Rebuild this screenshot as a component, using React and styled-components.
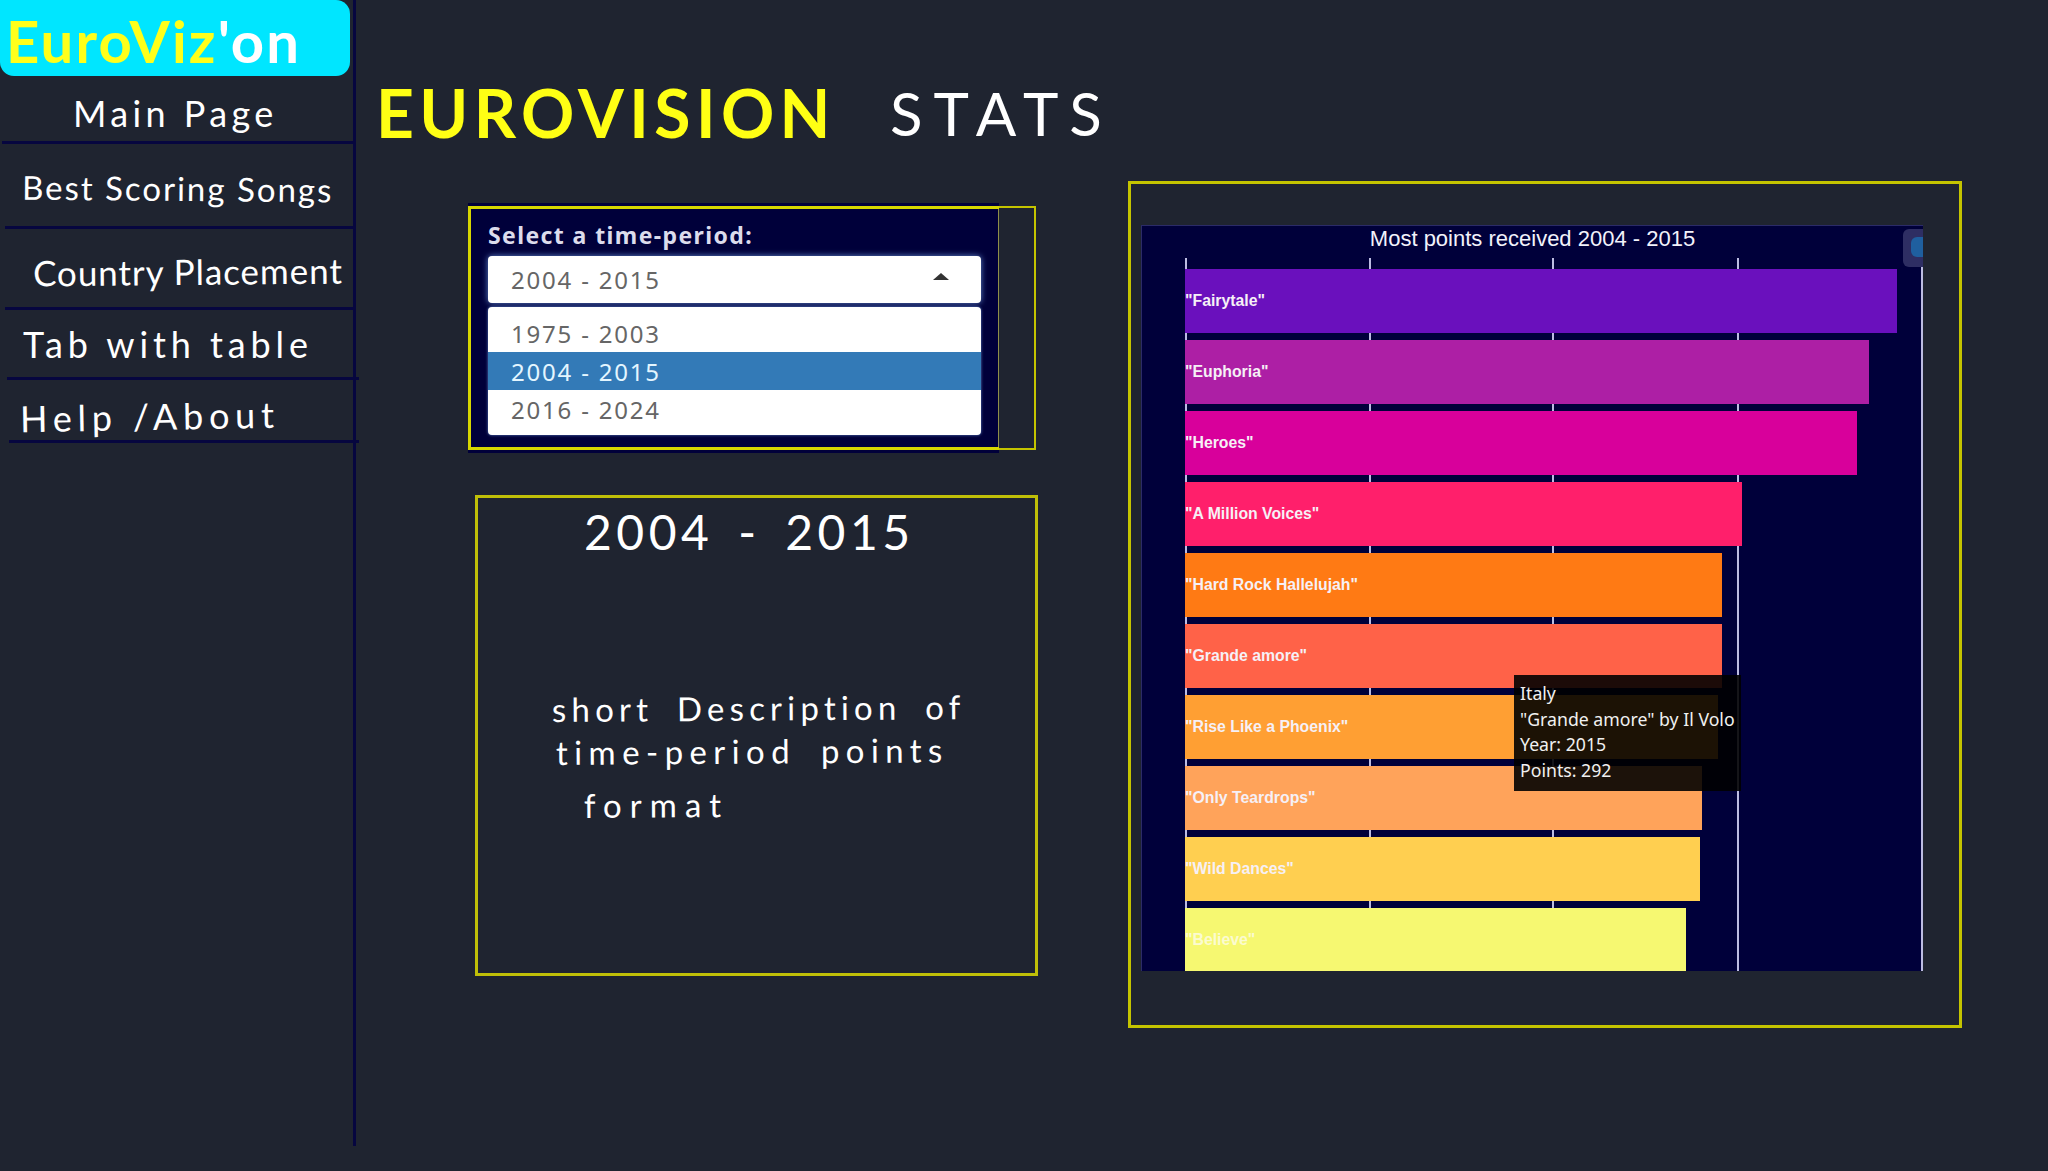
import React from 'react';
import styled, { createGlobalStyle } from 'styled-components';

const NAV_ITEMS = [
  { label: 'Main Page', height: 144, inset: 2, indent: 71, tilt: 0, size: 36, spacing: 4.4, right: 0, lift: 8 },
  { label: 'Best Scoring Songs', height: 85, inset: 5, indent: 17, tilt: 0.5, size: 33, spacing: 2, right: 0, lift: 5 },
  { label: 'Country Placement', height: 81, inset: 5, indent: 28, tilt: -0.5, size: 35, spacing: 0.95, right: 0, lift: 5 },
  { label: 'Tab with table', height: 70, inset: 7, indent: 16, tilt: 0, size: 36, spacing: 4.9, right: 6, lift: 0 },
  { label: 'Help /About', height: 63, inset: 9, indent: 11, tilt: -1, size: 36, spacing: 5.8, right: 6, lift: 12 },
];

const SONGS = [
  { title: '"Fairytale"', end: 1898, color: '#6a10bd' },
  { title: '"Euphoria"', end: 1870, color: '#ad1fa5' },
  { title: '"Heroes"', end: 1858, color: '#d8009b' },
  { title: '"A Million Voices"', end: 1743, color: '#ff1f6b' },
  { title: '"Hard Rock Hallelujah"', end: 1723, color: '#ff7a14' },
  { title: '"Grande amore"', end: 1723, color: '#ff6248' },
  { title: '"Rise Like a Phoenix"', end: 1719, color: '#ff9f33' },
  { title: '"Only Teardrops"', end: 1703, color: '#ffa35a' },
  { title: '"Wild Dances"', end: 1701, color: '#ffcf50' },
  { title: '"Believe"', end: 1687, color: '#f6f871', faded: true },
];

const GRID_LINES = [43, 227, 410, 595, 779];
const PERIODS = ['1975 - 2003', '2004 - 2015', '2016 - 2024'];
const PLOT_LEFT = 1186;

const GlobalStyle = createGlobalStyle`
  html, body {
    margin: 0;
    background: #1f2430;
  }
  * {
    box-sizing: border-box;
  }
`;

const Page = styled.div`
  display: flex;
  width: 2048px;
  height: 1171px;
  overflow: hidden;
  background: #1f2430;
  color: #fff;
  font-family: "Lato", "Liberation Sans", sans-serif;
`;

const Sidebar = styled.aside`
  width: 356px;
  height: 1146px;
  flex-shrink: 0;
  border-right: 3px solid #06063f;
`;

const Logo = styled.div`
  width: 350px;
  height: 76px;
  padding: 9px 0 0 6px;
  background: #00e6ff;
  border-radius: 0 14px 14px 14px;
  color: #ffff1a;
  font-size: 58px;
  font-weight: 700;
  line-height: 64px;
  letter-spacing: 2.2px;
  white-space: nowrap;
  span {
    color: #fff;
  }
`;

const NavRow = styled.div`
  display: flex;
  align-items: center;
  height: ${p => p.$height}px;
  margin-left: ${p => p.$inset}px;
  margin-right: -${p => p.$right}px;
  padding: ${p => p.$lift}px 0 0 ${p => p.$indent}px;
  border-bottom: 3px solid #06063f;
  &:first-of-type {
    height: 68px;
  }
`;

const NavLabel = styled.span`
  font-size: ${p => p.$size}px;
  letter-spacing: ${p => p.$spacing}px;
  white-space: nowrap;
  transform: rotate(${p => p.$tilt}deg);
`;

const Main = styled.main`
  flex: 1;
  padding-left: 20px;
`;

const Heading = styled.h1`
  display: flex;
  height: 181px;
  margin: 0;
  padding-top: 78px;
  font-size: 66px;
  font-weight: 700;
  line-height: 70px;
  letter-spacing: 5.4px;
  white-space: nowrap;
`;

const HeadingAccent = styled.span`
  color: #ffff14;
`;

const HeadingRest = styled.span`
  margin-left: 54px;
  font-size: 60px;
  font-weight: 400;
  letter-spacing: 11px;
`;

const Columns = styled.div`
  display: flex;
  align-items: flex-start;
`;

const LeftColumn = styled.div`
  display: flex;
  flex-direction: column;
  width: 570px;
  margin: 25px 90px 0 92px;
`;

const SelectFrame = styled.div`
  width: 568px;
  height: 244px;
  border: 2px solid #c4c400;
  border-left: none;
`;

const SelectPanel = styled.div`
  display: flex;
  flex-direction: column;
  width: 531px;
  height: 250px;
  margin-top: -5px;
  padding: 16px 18px 0 20px;
  background: #00003a;
  border-top: 3px solid #00003a;
  border-bottom: 3px solid #00003a;
  box-shadow: inset 3px 3px 0 #d6d600, inset 0 -3px 0 #d6d600, inset -1px 0 0 #8f8f4a;
  font-family: "Noto Sans", "Liberation Sans", sans-serif;
`;

const SelectLabel = styled.label`
  height: 26px;
  color: #dcdcec;
  font-size: 23px;
  font-weight: 700;
  line-height: 26px;
  letter-spacing: 1.4px;
`;

const SelectControl = styled.div`
  display: flex;
  align-items: center;
  justify-content: space-between;
  height: 47px;
  margin-top: 8px;
  padding: 0 32px 0 23px;
  background: #fff;
  border-radius: 4px;
  box-shadow: 0 0 6px rgba(130, 180, 255, 0.75);
  color: #666;
  font-size: 24px;
  letter-spacing: 1.8px;
`;

const Caret = styled.i`
  width: 0;
  height: 0;
  margin-bottom: 6px;
  border-left: 8px solid transparent;
  border-right: 8px solid transparent;
  border-bottom: 7px solid #333;
`;

const SelectMenu = styled.ul`
  display: flex;
  flex-direction: column;
  height: 128px;
  margin: 4px 0 0;
  padding: 7px 0 0;
  background: #fff;
  border-radius: 4px;
  box-shadow: 0 0 3px rgba(130, 180, 255, 0.7);
  list-style: none;
  overflow: hidden;
`;

const SelectOption = styled.li`
  display: flex;
  align-items: center;
  height: 38px;
  flex-shrink: 0;
  padding-left: 23px;
  background: ${p => (p.$active ? '#337ab7' : '#fff')};
  color: ${p => (p.$active ? '#e4f6ff' : '#666')};
  font-size: 24px;
  letter-spacing: 1.8px;
`;

const DescriptionBox = styled.section`
  width: 563px;
  height: 481px;
  margin: 45px 0 0 7px;
  padding-top: 6px;
  border: 3px solid #bfbf08;
  font-family: "Lato", "Liberation Sans", sans-serif;
`;

const DescriptionTitle = styled.h2`
  margin: 0;
  height: 184px;
  padding-left: 106px;
  font-size: 48px;
  font-weight: 400;
  line-height: 56px;
  letter-spacing: 4.5px;
  word-spacing: 8px;
  white-space: nowrap;
`;

const DescriptionLine = styled.p`
  margin: 0 0 0 ${p => p.$indent}px;
  height: ${p => p.$height}px;
  font-size: 33px;
  line-height: 42px;
  letter-spacing: ${p => p.$spacing}px;
  word-spacing: 10px;
  white-space: nowrap;
  transform: rotate(${p => p.$tilt}deg);
  transform-origin: left center;
`;

const ChartBox = styled.section`
  width: 834px;
  height: 847px;
  padding: 41px 0 0 10px;
  border: 3px solid #c4c400;
`;

const Chart = styled.div`
  position: relative;
  width: 782px;
  height: 746px;
  padding: 0 0 0 43px;
  overflow: hidden;
  background: #00003a;
  border-top: 1px solid #2b2b68;
  border-left: 1px solid #2b2b68;
  font-family: "Liberation Sans", Arial, sans-serif;
`;

const ChartTitle = styled.h3`
  position: relative;
  z-index: 1;
  height: 43px;
  margin: 0 0 0 -43px;
  color: #f2f2fa;
  font-size: 22px;
  font-weight: 400;
  line-height: 26px;
  text-align: center;
`;

const GridLine = styled.i`
  position: absolute;
  top: 32px;
  bottom: 0;
  left: ${p => p.$left}px;
  width: 2px;
  background: #bcbce2;
`;

const ModeBar = styled.div`
  position: absolute;
  top: 3px;
  right: -6px;
  width: 26px;
  height: 38px;
  padding: 8px 6px;
  background: #2e2e63;
  border-radius: 6px;
  &::after {
    content: '';
    display: block;
    height: 20px;
    margin-left: 2px;
    background: #1f5f9f;
    border-radius: 6px 0 0 6px;
  }
`;

const Bars = styled.div`
  position: relative;
  display: flex;
  flex-direction: column;
  gap: 7px;
`;

const Bar = styled.div`
  display: flex;
  align-items: center;
  flex-shrink: 0;
  width: ${p => p.$width}px;
  height: 64px;
  background: ${p => p.$color};
  color: ${p => (p.$faded ? '#fbfbd0' : '#f6f0f6')};
  font-size: 15.8px;
  font-weight: 700;
  white-space: nowrap;
`;

const Tooltip = styled.div`
  position: absolute;
  top: 449px;
  left: 372px;
  width: 227px;
  height: 116px;
  padding: 6px 0 0 6px;
  background: rgba(0, 0, 0, 0.89);
  color: #f0f0f0;
  font-family: "Noto Sans", "Liberation Sans", sans-serif;
  font-size: 17.7px;
  line-height: 25.5px;
  white-space: nowrap;
`;

export default function App() {
  return (
    <Page>
      <GlobalStyle />
      <Sidebar>
        <Logo>EuroViz<span>'on</span></Logo>
        <nav>
          {NAV_ITEMS.map(item => (
            <NavRow
              key={item.label}
              $height={item.height}
              $inset={item.inset}
              $indent={item.indent}
              $right={item.right}
              $lift={item.lift}
            >
              <NavLabel $size={item.size} $spacing={item.spacing} $tilt={item.tilt}>
                {item.label}
              </NavLabel>
            </NavRow>
          ))}
        </nav>
      </Sidebar>

      <Main>
        <Heading>
          <HeadingAccent>EUROVISION</HeadingAccent>
          <HeadingRest>STATS</HeadingRest>
        </Heading>

        <Columns>
          <LeftColumn>
            <SelectFrame>
              <SelectPanel>
                <SelectLabel>Select a time-period:</SelectLabel>
                <SelectControl>
                  2004 - 2015
                  <Caret />
                </SelectControl>
                <SelectMenu>
                  {PERIODS.map(period => (
                    <SelectOption key={period} $active={period === '2004 - 2015'}>
                      {period}
                    </SelectOption>
                  ))}
                </SelectMenu>
              </SelectPanel>
            </SelectFrame>

            <DescriptionBox>
              <DescriptionTitle>2004 - 2015</DescriptionTitle>
              <DescriptionLine $indent={74} $height={43} $spacing={5.2} $tilt={-0.4}>
                short Description of
              </DescriptionLine>
              <DescriptionLine $indent={78} $height={53} $spacing={6.4} $tilt={-0.4}>
                time-period points
              </DescriptionLine>
              <DescriptionLine $indent={106} $height={44} $spacing={8} $tilt={-0.4}>
                format
              </DescriptionLine>
            </DescriptionBox>
          </LeftColumn>

          <ChartBox>
            <Chart>
              {GRID_LINES.map(left => (
                <GridLine key={left} $left={left} />
              ))}
              <ModeBar />
              <ChartTitle>Most points received 2004 - 2015</ChartTitle>
              <Bars>
                {SONGS.map(song => (
                  <Bar
                    key={song.title}
                    $width={song.end - PLOT_LEFT}
                    $color={song.color}
                    $faded={song.faded}
                  >
                    {song.title}
                  </Bar>
                ))}
              </Bars>
              <Tooltip>
                Italy<br />
                "Grande amore" by Il Volo<br />
                Year: 2015<br />
                Points: 292
              </Tooltip>
            </Chart>
          </ChartBox>
        </Columns>
      </Main>
    </Page>
  );
}
